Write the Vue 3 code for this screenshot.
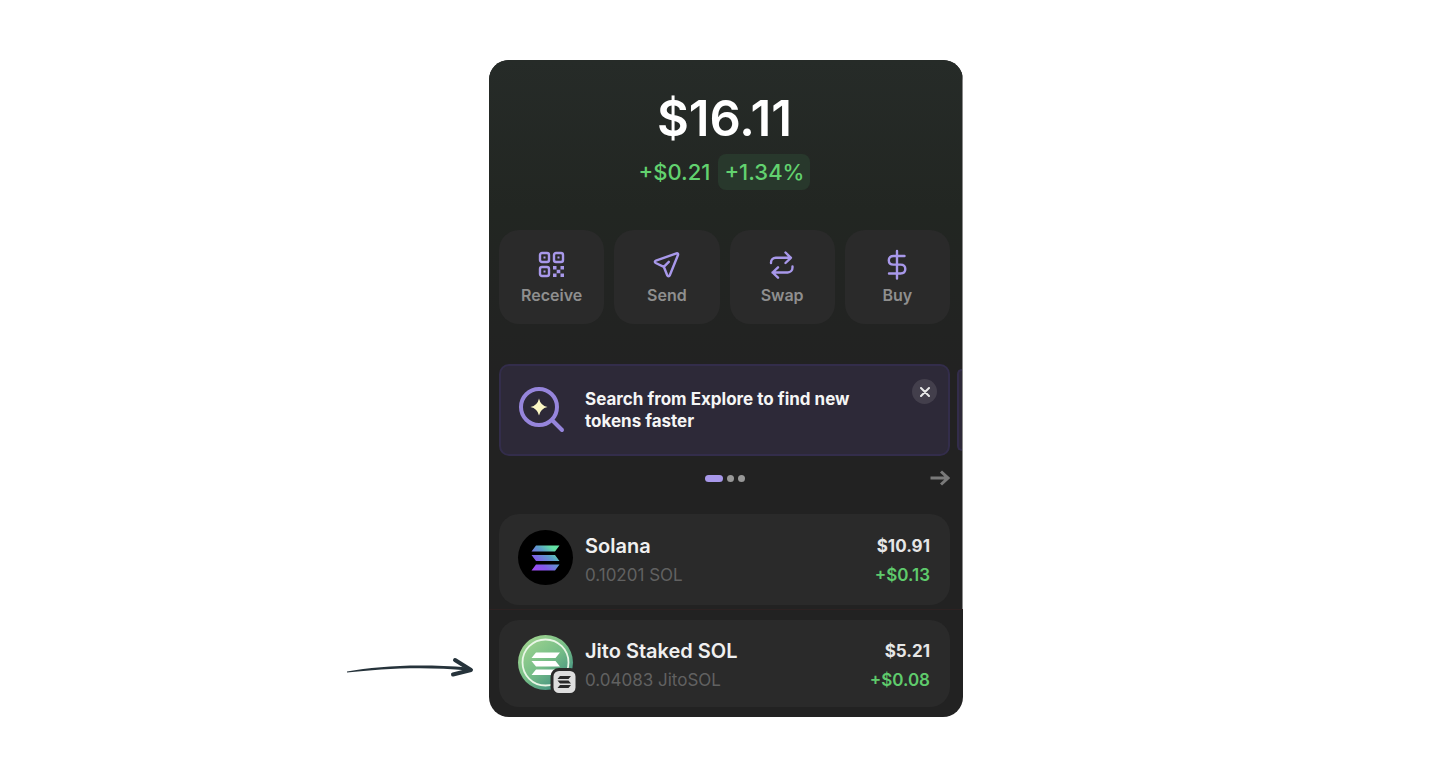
<template>
  <main class="page">
    <div class="frame">
      <svg class="pointer" viewBox="0 0 130 24" aria-hidden="true">
        <path d="M1 15.6 C32 10 72 7.500 122 11.500 L122 14.500 C76 9.800 34 13 1 16.400 Z" />
        <path class="pointer-head" d="M109 4 L125 14 L107 18.500" />
      </svg>

      <section class="wallet">
        <div class="upper">
          <header class="balance">
            <h1>$16.11</h1>
            <p class="change">
              <span>+$0.21</span>
              <span class="percent">+1.34%</span>
            </p>
          </header>

          <nav class="actions">
            <button v-for="action in actions" :key="action.label" type="button" class="action">
              <svg v-if="action.icon === 'qr'" class="action-icon" viewBox="0 0 28 28">
                <rect x="2" y="2" width="9" height="9" rx="2" />
                <rect x="16" y="2" width="9" height="9" rx="2" />
                <rect x="2" y="16" width="9" height="9" rx="2" />
                <path class="solid" d="M5.500 5.500h2v2h-2z M19.500 5.500h2v2h-2z M5.500 19.500h2v2h-2z M15 15h3.500v3.500H15z M22.500 15H26v3.500h-3.500z M18.700 18.700h3.600v3.600h-3.600z M15 22.500h3.500V26H15z M22.500 22.500H26V26h-3.500z" />
              </svg>
              <svg v-else-if="action.icon === 'send'" class="action-icon" viewBox="0 0 28 28">
                <path d="M23.500 2.400 L2.900 9.600 C1.500 10.100 1.500 11.400 2.700 12 L10.800 15.800 L14.200 24.300 C14.700 25.500 16.300 25.500 16.800 24.200 L25 4 C25.400 2.900 24.600 2 23.500 2.400 Z M10.800 15.800 L15.800 10.800" />
              </svg>
              <svg v-else-if="action.icon === 'swap'" class="action-icon" viewBox="0 0 28 28">
                <path d="M3 12 V11.500 C3 8.700 5 6.800 7.800 6.800 H23 M17.500 1.500 L22.900 6.800 L17.500 12 M24.500 15.500 V16.500 C24.500 19.300 22.500 21.500 19.700 21.500 H4.500 M10 16.300 L4.600 21.500 L10 26.700" />
              </svg>
              <svg v-else class="action-icon" viewBox="0 0 28 28">
                <path d="M14 0 V27.500 M21.500 5 H10.500 C7.500 5 5.800 6.700 5.800 9.200 C5.800 11.700 7.500 13.600 10.500 13.600 H17.500 C20.500 13.600 22.300 15.500 22.300 18 C22.300 20.600 20.500 22.500 17.500 22.500 H6" />
              </svg>
              <span>{{ action.label }}</span>
            </button>
          </nav>

          <div class="carousel">
            <article class="banner">
              <svg class="search-icon" viewBox="0 0 50 50" aria-hidden="true">
                <circle cx="22" cy="22" r="18" />
                <path class="handle" d="M35.500 35.500 L45 45" />
                <path class="spark" d="M22 13.500 Q23.500 20.500 30.500 22 Q23.500 23.500 22 30.500 Q20.500 23.500 13.500 22 Q20.500 20.500 22 13.500 Z" />
              </svg>
              <p>Search from Explore to find new tokens faster</p>
              <button type="button" class="close" aria-label="Dismiss">
                <svg viewBox="0 0 10 10"><path d="M1 1 L9 9 M9 1 L1 9" /></svg>
              </button>
            </article>
            <div class="banner-next"></div>
          </div>

          <div class="pager">
            <div class="dots">
              <i v-for="n in 3" :key="n" :class="{ active: n === 1 }"></i>
            </div>
            <button type="button" class="next" aria-label="Next">
              <svg viewBox="0 0 20 16"><path d="M0.500 8 H18 M11 1.500 L18 8 L11 14.500" /></svg>
            </button>
          </div>

          <div class="token">
            <svg class="token-icon" viewBox="0 0 55 55" aria-hidden="true">
              <defs>
                <linearGradient id="sol" gradientUnits="userSpaceOnUse" x1="16" y1="40" x2="38" y2="14">
                  <stop offset="0" stop-color="#a04cf5" />
                  <stop offset="0.250" stop-color="#8358ee" />
                  <stop offset="0.600" stop-color="#5b9fc8" />
                  <stop offset="0.850" stop-color="#63e2a4" />
                </linearGradient>
              </defs>
              <circle cx="27.500" cy="27.500" r="27.500" />
              <path fill="url(#sol)" d="M18 15.500 H41.500 L37 21.500 H13.500 Z M13.500 25 H37 L41.500 31 H18 Z M18 34.500 H41.500 L37 40.500 H13.500 Z" />
            </svg>
            <div class="info">
              <h2>Solana</h2>
              <p>0.10201 SOL</p>
            </div>
            <div class="value">
              <strong>$10.91</strong>
              <span>+$0.13</span>
            </div>
          </div>
        </div>

        <div class="lower">
          <div class="token short">
            <svg class="token-icon" viewBox="0 0 55 55" aria-hidden="true">
              <defs>
                <linearGradient id="jito" x1="0.200" y1="0.100" x2="0.850" y2="0.900">
                  <stop offset="0" stop-color="#9bd18e" />
                  <stop offset="0.500" stop-color="#75bd87" />
                  <stop offset="1" stop-color="#3e8c80" />
                </linearGradient>
              </defs>
              <circle cx="27.500" cy="27.500" r="27.500" fill="url(#jito)" />
              <circle cx="27.500" cy="27.500" r="23" fill="none" stroke="#e9f6e6" stroke-width="1.800" />
              <path fill="#fff" d="M18 17.500 H42 L37.500 23 H13.500 Z M13.500 26 H37.500 L42 31.500 H18 Z M18 34.500 H42 L37.500 40 H13.500 Z" />
              <rect class="chain" x="34" y="34.500" width="25" height="25" rx="7" />
              <path fill="#2a2a2a" d="M42 41 H53 L50.500 44 H39.500 Z M39.500 45.500 H50.500 L53 48.500 H42 Z M42 50 H53 L50.500 53 H39.500 Z" />
            </svg>
            <div class="info">
              <h2>Jito Staked SOL</h2>
              <p>0.04083 JitoSOL</p>
            </div>
            <div class="value">
              <strong>$5.21</strong>
              <span>+$0.08</span>
            </div>
          </div>
        </div>
      </section>
    </div>
  </main>
</template>

<script setup>
const actions = [
  { label: 'Receive', icon: 'qr' },
  { label: 'Send', icon: 'send' },
  { label: 'Swap', icon: 'swap' },
  { label: 'Buy', icon: 'buy' },
];
</script>

<style>
body {
  margin: 0;
  background: #fff;
}
</style>

<style scoped>
* {
  box-sizing: border-box;
}

h1,
h2,
p {
  margin: 0;
}

button {
  border: none;
  padding: 0;
  font-family: inherit;
  cursor: pointer;
}

svg {
  display: block;
}

.page {
  display: flex;
  justify-content: center;
  padding: 60px 0 47px 2px;
  font-family: Inter, sans-serif;
}

.frame {
  position: relative;
  width: 100%;
  max-width: 474px;
}

.pointer {
  position: absolute;
  right: 100%;
  bottom: 37px;
  width: 130px;
  margin-right: 13px;
  fill: #26333b;
}

.pointer-head {
  fill: none;
  stroke: #26333b;
  stroke-width: 4;
  stroke-linecap: round;
  stroke-linejoin: round;
}

.wallet {
  overflow: hidden;
  border-radius: 20px;
  background: #222;
}

.upper {
  padding: 30px 12px 4px 10px;
  border-right: 1px solid #8a8a8a;
  background: linear-gradient(#262b28, #222622 150px, #222 310px);
}

.balance {
  display: flex;
  flex-direction: column;
  align-items: center;
  gap: 6px;
}

h1 {
  font-size: 49px;
  line-height: 58px;
  font-weight: 600;
  color: #fff;
}

.change {
  display: flex;
  align-items: center;
  gap: 8px;
  font-size: 22px;
  line-height: 36px;
  font-weight: 500;
  color: #62d26f;
}

.percent {
  padding: 0 6px;
  border-radius: 8px;
  background: #28382c;
}

.actions {
  display: grid;
  grid-template-columns: repeat(4, 1fr);
  gap: 10px;
  margin-top: 40px;
}

.action {
  display: flex;
  flex-direction: column;
  align-items: center;
  gap: 6px;
  padding: 21px 0 19px;
  border-radius: 20px;
  background: #2a2a2a;
  color: #8f8f8f;
  font-size: 16px;
  line-height: 20px;
  font-weight: 600;
}

.action-icon {
  width: 28px;
  height: 28px;
  overflow: visible;
  fill: none;
  stroke: #a898ea;
  stroke-width: 2.4;
  stroke-linecap: round;
  stroke-linejoin: round;
}

.solid {
  fill: #a898ea;
  stroke: none;
}

.carousel {
  display: flex;
  align-items: center;
  gap: 7px;
  margin: 40px -12px 0 0;
  overflow: hidden;
}

.banner {
  position: relative;
  display: flex;
  align-items: center;
  gap: 18px;
  flex: 1;
  padding: 19px 80px 19px 16px;
  border: 2px solid #332d4b;
  border-radius: 10px;
  background: #2d2938;
}

.banner p {
  font-size: 17px;
  line-height: 22px;
  font-weight: 700;
  color: #f5f5f5;
}

.search-icon {
  flex: none;
  width: 50px;
  height: 50px;
  fill: none;
  stroke: #9685dc;
  stroke-width: 4;
  stroke-linecap: round;
}

.spark {
  fill: #fbf7c4;
  stroke: none;
}

.close {
  position: absolute;
  top: 13px;
  right: 11px;
  display: grid;
  place-items: center;
  width: 25px;
  height: 25px;
  border-radius: 50%;
  background: #433f4c;
}

.close svg {
  width: 10px;
  height: 10px;
  stroke: #e8e8e8;
  stroke-width: 2;
  stroke-linecap: round;
}

.banner-next {
  width: 5px;
  height: 82px;
  border: 2px solid #332d4b;
  border-right: none;
  border-radius: 8px 0 0 8px;
  background: #2d2938;
}

.pager {
  display: grid;
  grid-template-columns: 1fr auto 1fr;
  align-items: center;
  margin-top: 14px;
}

.dots {
  grid-column: 2;
  display: flex;
  gap: 4px;
}

.dots i {
  width: 7px;
  height: 7px;
  border-radius: 4px;
  background: #989898;
}

.dots .active {
  width: 18px;
  background: #a898ea;
}

.next {
  justify-self: end;
  background: none;
}

.next svg {
  width: 20px;
  height: 16px;
  fill: none;
  stroke: #7a7a7a;
  stroke-width: 3;
}

.token {
  display: flex;
  align-items: flex-start;
  gap: 12px;
  margin-top: 28px;
  padding: 16px 20px 15px 19px;
  border-radius: 20px;
  background: #2a2a2a;
}

.token.short {
  margin-top: 0;
  padding-top: 15px;
  padding-bottom: 12px;
}

.token-icon {
  flex: none;
  width: 55px;
  height: 55px;
  overflow: visible;
}

.chain {
  fill: #dedede;
  stroke: #2a2a2a;
  stroke-width: 3;
}

.info {
  flex: 1;
  padding-top: 2px;
}

h2 {
  font-size: 20px;
  line-height: 29px;
  font-weight: 600;
  color: #f0f0f0;
}

.info p {
  font-size: 17px;
  line-height: 29px;
  color: #616161;
}

.value {
  display: flex;
  flex-direction: column;
  align-items: flex-end;
  padding-top: 2px;
  font-size: 17px;
  line-height: 29px;
  font-weight: 600;
  color: #e6e6e6;
}

.value strong {
  font-weight: 700;
}

.value span {
  color: #5fcb6c;
}

.lower {
  padding: 10px 13px 10px 10px;
  border-top: 1px solid #2d2222;
}
</style>
